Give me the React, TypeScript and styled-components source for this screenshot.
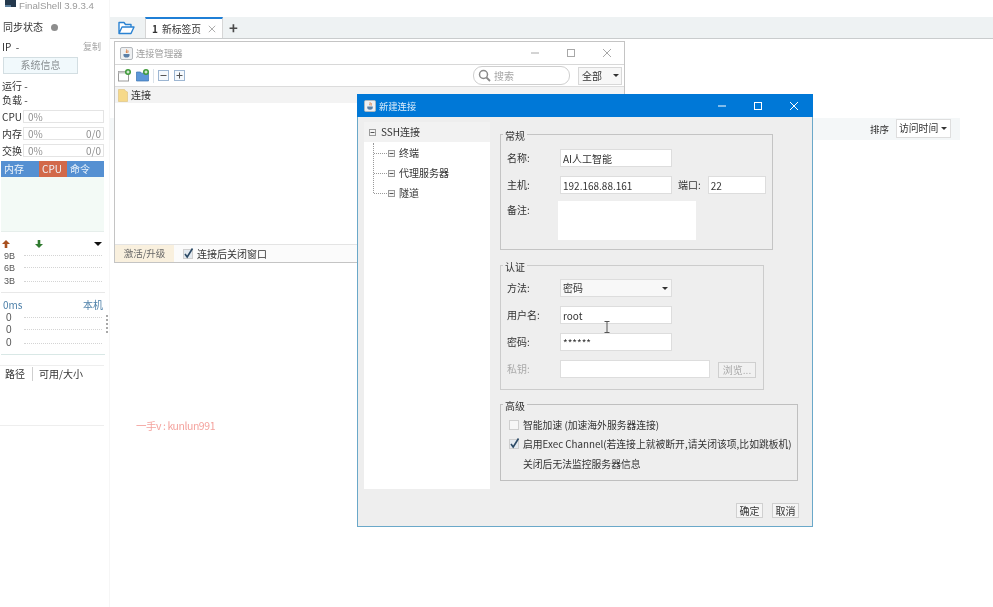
import React from "react";
import styled, { createGlobalStyle } from "styled-components";

const Global = createGlobalStyle`
  html, body { margin: 0; padding: 0; background: #fff; }
  * { box-sizing: border-box; }
`;

const Page = styled.div`
  position: relative;
  display: flex;
  width: 993px;
  height: 607px;
  overflow: hidden;
  background: #fff;
  color: #333;
  font: 10px/14px "Noto Sans CJK SC", "Noto Sans", sans-serif;
  filter: blur(0.35px);
`;

/* ---------- sidebar ---------- */
const Sidebar = styled.aside`
  position: relative;
  flex: 0 0 110px;
  display: flex;
  flex-direction: column;
  border-right: 1px solid #f6f6f6;
`;
const AppTitle = styled.div`
  display: flex;
  align-items: flex-start;
  gap: 3px;
  height: 10px;
  padding-left: 5px;
  color: #9a9a9a;
  font-family: "Liberation Sans", sans-serif;
  font-size: 9.7px;
  line-height: normal;
`;
const SyncRow = styled.div`
  display: flex;
  align-items: center;
  gap: 8px;
  height: 14px;
  margin-top: 10px;
  padding-left: 3px;
`;
const Dot = styled.i`
  width: 7px;
  height: 7px;
  border-radius: 50%;
  background: #8d8d8d;
`;
const IpRow = styled.div`
  display: flex;
  justify-content: space-between;
  width: 101px;
  height: 14px;
  margin-top: 6px;
  padding-left: 2px;
`;
const Muted = styled.span`
  color: #a5a5a5;
  font-size: 9px;
`;
const SysButton = styled.div`
  width: 75px;
  height: 17px;
  margin: 3px 0 5px 3px;
  border: 1px solid #d3dee2;
  background: #f1f9fc;
  color: #8a8f92;
  text-align: center;
  line-height: 14px;
`;
const PlainRow = styled.div`
  height: 14px;
  padding-left: 2px;
`;
const Meters = styled.div`
  display: flex;
  flex-direction: column;
  gap: 4px;
  margin-top: 3px;
`;
const MeterRow = styled.div`
  display: flex;
  align-items: center;
  height: 13px;
  padding-left: 2px;
`;
const MeterLabel = styled.span`
  width: 21px;
`;
const MeterBox = styled.div`
  display: flex;
  justify-content: space-between;
  width: 81px;
  height: 13px;
  padding: 0 2px 0 4px;
  border: 1px solid #e4e4e4;
  color: #909090;
  line-height: 11px;
  font-size: 10px;
`;
const TabStrip = styled.div`
  display: flex;
  width: 103px;
  height: 16px;
  margin: 4px 0 0 1px;
`;
const SideTab = styled.div<{ $w: number; $active?: boolean }>`
  width: ${(p) => p.$w}px;
  padding-left: 3px;
  background: ${(p) => (p.$active ? "#d2694a" : "#5590d2")};
  color: #eef5fb;
  line-height: 15px;
`;
const ChartArea = styled.div`
  width: 103px;
  height: 55px;
  margin-left: 1px;
  background: #f3faf6;
  border-bottom: 1px solid #e6eeeb;
`;
const NetHeader = styled.div`
  display: flex;
  align-items: center;
  justify-content: space-between;
  width: 102px;
  height: 12px;
  margin-top: 6px;
  padding: 0 0 0 2px;
`;
const ArrowGroup = styled.div`
  display: flex;
  gap: 25px;
`;
const LinePanel = styled.div<{ $tone: string }>`
  width: 104px;
  margin-left: 1px;
  border-bottom: 1px solid ${(p) => p.$tone};
`;
const ChartRow = styled.div<{ $h: number; $big?: boolean }>`
  display: flex;
  align-items: center;
  height: ${(p) => p.$h}px;
  padding-left: ${(p) => (p.$big ? 5 : 3)}px;
  font-family: "Liberation Sans", sans-serif;
  font-size: ${(p) => (p.$big ? 10 : 9)}px;
  line-height: 10px;
  color: #555;
`;
const RowLabel = styled.span<{ $big?: boolean }>`
  flex: 0 0 ${(p) => (p.$big ? 18 : 20)}px;
`;
const DotLine = styled.span`
  flex: 1;
  margin-right: 3px;
  border-top: 1px dotted #d4d4d4;
`;
const LatencyHead = styled.div`
  display: flex;
  justify-content: space-between;
  width: 104px;
  height: 14px;
  margin-top: 5px;
  padding: 0 1px 0 3px;
  color: #4c7fa8;
`;
const TablePanel = styled.div`
  display: flex;
  align-items: flex-start;
  width: 104px;
  height: 61px;
  margin-top: 10px;
  padding-top: 1px;
  border-top: 1px solid #eeeeee;
  border-bottom: 1px solid #eeeeee;
`;
const Col = styled.div<{ $w: number; $line?: boolean }>`
  width: ${(p) => p.$w}px;
  height: 14px;
  padding-left: ${(p) => (p.$line ? 6 : 5)}px;
  line-height: 14px;
  border-left: ${(p) => (p.$line ? "1px solid #cfcfcf" : "none")};
`;
const Splitter = styled.div`
  position: absolute;
  left: 106px;
  top: 315px;
  display: flex;
  flex-direction: column;
  gap: 2.5px;
  i {
    width: 1.5px;
    height: 1.5px;
    background: #a8a8a8;
  }
`;

/* ---------- main ---------- */
const Main = styled.main`
  flex: 1;
  display: flex;
  flex-direction: column;
`;
const TabBar = styled.div`
  display: flex;
  align-items: flex-end;
  height: 22px;
  margin-top: 17px;
  padding-left: 8px;
  background: #eef2f3;
  border-bottom: 1px solid #c9cccd;
`;
const FolderSlot = styled.div`
  display: flex;
  align-self: center;
  width: 27px;
`;
const Tab = styled.div`
  display: flex;
  align-items: center;
  width: 78px;
  height: 21px;
  padding-left: 6px;
  background: #fff;
  border: 1px solid #d6d6d6;
  border-top: 2px solid #1f7fd6;
  border-bottom: none;
  font-size: 9.8px;
  color: #333;
`;
const TabNum = styled.b`
  margin-right: 4px;
  font-size: 10px;
`;
const TabClose = styled.span`
  display: flex;
  margin-left: 7px;
`;
const PlusTab = styled.div`
  align-self: center;
  margin-left: 6px;
  color: #4a4a4a;
  font-size: 15px;
  font-weight: 700;
  line-height: 14px;
`;
const SortBar = styled.div`
  display: flex;
  align-items: center;
  justify-content: flex-end;
  gap: 7px;
  height: 22px;
  margin: 79px 33px 0 0;
  padding-right: 9px;
  background: #f4f7f8;
  font-size: 9.5px;
`;
const SortSelect = styled.div`
  display: flex;
  align-items: center;
  justify-content: space-between;
  width: 55px;
  height: 19px;
  margin-top: -2px;
  padding: 0 3px 0 2px;
  background: #fff;
  border: 1px solid #dedede;
  font-size: 9.8px;
`;
const Caret = styled.i<{ $c?: string; $big?: boolean }>`
  flex: none;
  width: 0;
  height: 0;
  border-left: ${(p) => (p.$big ? 4 : 3)}px solid transparent;
  border-right: ${(p) => (p.$big ? 4 : 3)}px solid transparent;
  border-top: ${(p) => (p.$big ? 4 : 3)}px solid ${(p) => p.$c ?? "#333"};
`;

/* ---------- connection manager ---------- */
const ManagerWindow = styled.section`
  position: absolute;
  left: 114px;
  top: 41px;
  width: 511px;
  height: 222px;
  display: flex;
  flex-direction: column;
  background: #fff;
  border: 1px solid #c4c4c4;
`;
const ManagerTitle = styled.header`
  display: flex;
  align-items: center;
  gap: 3px;
  height: 23px;
  padding-left: 5px;
  border-bottom: 1px solid #d8d8d8;
  color: #a0a0a0;
  font-size: 9.3px;
`;
const WinControls = styled.div`
  display: flex;
  gap: 26px;
  margin-left: auto;
  padding-right: 12px;
`;
const Toolbar = styled.div`
  display: flex;
  align-items: center;
  height: 22px;
  padding: 0 2px 0 3px;
  border-bottom: 1px solid #dcdcdc;
`;
const ToolIcons = styled.div`
  display: flex;
  align-items: center;
  gap: 5px;
`;
const ToolSep = styled.i`
  width: 1px;
  height: 14px;
  margin: 0 -1px;
  background: #dbe3ea;
`;
const SearchBox = styled.div`
  display: flex;
  align-items: center;
  gap: 3px;
  width: 97px;
  height: 19px;
  margin-left: auto;
  padding-left: 4px;
  border: 1px solid #cfcfcf;
  border-radius: 9px;
  color: #a5a5a5;
`;
const ScopeSelect = styled.div`
  display: flex;
  align-items: center;
  justify-content: space-between;
  width: 44px;
  height: 18px;
  margin-left: 8px;
  padding: 0 2px 0 3px;
  border: 1px solid #d8d8d8;
  background: #f7f7f7;
`;
const TreeRow = styled.div`
  display: flex;
  align-items: center;
  gap: 3px;
  height: 16px;
  padding-left: 3px;
  background: #f3f3f3;
`;
const ManagerSpacer = styled.div`
  flex: 1;
`;
const ManagerFooter = styled.footer`
  display: flex;
  align-items: center;
  height: 18px;
  border-top: 1px solid #e4e4e4;
  background: #fbfbfb;
`;
const UpgradeTab = styled.div`
  width: 59px;
  height: 17px;
  background: #f9f0de;
  color: #666;
  text-align: center;
  line-height: 17px;
  font-size: 9.5px;
`;
const FooterCheck = styled.div`
  display: flex;
  align-items: center;
  gap: 4px;
  margin-left: 9px;
`;

/* ---------- new connection dialog ---------- */
const Dialog = styled.section`
  position: absolute;
  left: 357px;
  top: 94px;
  width: 456px;
  height: 433px;
  display: flex;
  flex-direction: column;
  background: #eeeeee;
  border: 1px solid #6aa8c9;
  border-top: none;
`;
const DialogTitle = styled.header`
  display: flex;
  align-items: center;
  gap: 3px;
  height: 23px;
  margin: 0 -1px;
  padding-left: 7px;
  background: #0078d7;
  color: #d7ebfa;
  font-size: 9.3px;
`;
const DialogControls = styled.div`
  display: flex;
  align-items: center;
  gap: 26px;
  margin-left: auto;
  padding-right: 14px;
`;
const DialogBody = styled.div`
  flex: 1;
  display: flex;
  min-height: 0;
`;
const TreePane = styled.nav`
  flex: 0 0 126px;
  height: 367px;
  margin: 5px 0 0 6px;
  background: #fff;
`;
const TreeRoot = styled.div`
  display: flex;
  align-items: center;
  gap: 5px;
  height: 20px;
  padding-left: 5px;
  background: #f2f2f2;
`;
const TreeChildren = styled.div`
  width: 110px;
  margin: 1px 0 0 9px;
  height: 50px;
  border-left: 1px dotted #999;
`;
const TreeChild = styled.div`
  display: flex;
  align-items: center;
  gap: 4px;
  height: 20px;
  white-space: nowrap;
`;
const Connector = styled.i`
  width: 13px;
  margin-right: -3px;
  border-top: 1px dotted #999;
`;
const FormPane = styled.div`
  flex: 1;
  display: flex;
  flex-direction: column;
  padding: 11px 13px 8px 10px;
`;
const Group = styled.fieldset<{ $w: number; $h: number; $top: number; $tone?: string; $gap?: number }>`
  display: block;
  flex: none;
  width: ${(p) => p.$w}px;
  height: ${(p) => p.$h}px;
  margin: 0 0 ${(p) => p.$gap ?? 0}px;
  padding: ${(p) => p.$top}px 0 0 6px;
  border: 1px solid ${(p) => p.$tone ?? "#c4c4c4"};
  min-width: 0;
`;
const GroupTitle = styled.legend`
  position: relative;
  top: 2px;
  margin-left: -4px;
  padding: 0 2px;
  line-height: 12px;
  font-size: 10px;
`;
const FieldRow = styled.div<{ $gap?: number }>`
  display: flex;
  align-items: flex-start;
  margin-bottom: ${(p) => p.$gap ?? 9}px;
`;
const FieldLabel = styled.label<{ $disabled?: boolean }>`
  flex: 0 0 53px;
  height: 18px;
  line-height: 18px;
  color: ${(p) => (p.$disabled ? "#aaa" : "#333")};
`;
const TextBox = styled.input<{ $w: number }>`
  width: ${(p) => p.$w}px;
  height: 18px;
  padding: 0 0 0 2px;
  border: 1px solid #dddddd;
  background: #fff;
  color: #333;
  font: inherit;
  outline: none;
`;
const PortLabel = styled.span`
  margin: 0 7px 0 6px;
  line-height: 18px;
`;
const NoteBox = styled.div`
  width: 138px;
  height: 39px;
  margin-left: -2px;
  background: #fff;
`;
const MethodSelect = styled.div`
  display: flex;
  align-items: center;
  justify-content: space-between;
  width: 112px;
  height: 18px;
  padding: 0 3px 0 2px;
  border: 1px solid #dddddd;
  background: #f8f8f8;
`;
const BrowseButton = styled.div`
  width: 38px;
  height: 16px;
  margin: 2px 0 0 8px;
  border: 1px solid #cfcfcf;
  background: #f1f1f1;
  color: #aaa;
  text-align: center;
  line-height: 14px;
`;
const CheckRow = styled.div`
  display: flex;
  align-items: center;
  gap: 4px;
  height: 19.5px;
  padding-left: 2px;
  white-space: nowrap;
  font-size: 9.8px;
`;
const CheckGap = styled.span`
  flex: 0 0 10px;
`;
const ButtonBar = styled.div`
  display: flex;
  justify-content: flex-end;
  gap: 9px;
  margin-top: auto;
`;
const DialogButton = styled.div`
  width: 27px;
  height: 15px;
  border: 1px solid #d0d0d0;
  background: #f5f5f5;
  text-align: center;
  line-height: 14px;
`;
const Watermark = styled.div`
  position: absolute;
  left: 136px;
  top: 419px;
  color: #f4a39e;
  font-size: 10.5px;
  letter-spacing: -0.45px;
`;
const TextCursor = styled.svg`
  position: absolute;
  left: 604px;
  top: 321px;
`;

/* ---------- drawings ---------- */
const JavaIcon = ({ size = 13 }: { size?: number }) => (
  <svg width={size} height={size} viewBox="0 0 13 13" style={{ flex: "none" }}>
    <rect x="0.5" y="0.5" width="12" height="12" rx="1.5" fill="#eef0f2" stroke="#b4b8bc" />
    <path d="M6.5 2.5c1 1.2-1 2 0 3.4M8 3.6c.5.8-.8 1.4 0 2.3" stroke="#d9702c" strokeWidth="1" fill="none" />
    <path d="M3.5 7h6v1.2c0 1.7-1.2 2.3-3 2.3s-3-.6-3-2.3z" fill="#5b7fa6" />
  </svg>
);
const MinGlyph = ({ c = "#a8a8a8" }: { c?: string }) => (
  <svg width="10" height="10" viewBox="0 0 10 10"><path d="M1 5h8" stroke={c} fill="none" /></svg>
);
const MaxGlyph = ({ c = "#a8a8a8" }: { c?: string }) => (
  <svg width="10" height="10" viewBox="0 0 10 10"><rect x="1.5" y="1.5" width="7" height="7" stroke={c} fill="none" /></svg>
);
const CloseGlyph = ({ c = "#a8a8a8", size = 10 }: { c?: string; size?: number }) => (
  <svg width={size} height={size} viewBox="0 0 10 10"><path d="M1 1l8 8M9 1l-8 8" stroke={c} fill="none" /></svg>
);
const FolderOpen = () => (
  <svg width="17" height="14" viewBox="0 0 17 14">
    <path d="M1 12.5V1.5h5l1.5 2H13v2.5M1 12.5L4 6h12l-3 6.5z" fill="#fff" stroke="#2b83d2" strokeWidth="1.4" strokeLinejoin="round" />
  </svg>
);
const NewConnIcon = () => (
  <svg width="13" height="13" viewBox="0 0 13 13">
    <rect x="0.5" y="2.5" width="10" height="9.5" fill="#fff" stroke="#9a9a9a" />
    <rect x="0.5" y="2.5" width="10" height="2" fill="#c9c9c9" />
    <circle cx="10" cy="3" r="3" fill="#3f9a3a" />
    <path d="M8.5 3h3M10 1.5v3" stroke="#fff" />
  </svg>
);
const NewFolderIcon = () => (
  <svg width="13" height="13" viewBox="0 0 13 13">
    <path d="M0.5 3h4l1 1.2h7V12h-12z" fill="#5c97d8" stroke="#3a73b3" strokeWidth=".7" />
    <circle cx="10" cy="3" r="3" fill="#3f9a3a" />
    <path d="M8.5 3h3M10 1.5v3" stroke="#fff" />
  </svg>
);
const BoxIcon = ({ plus }: { plus?: boolean }) => (
  <svg width="11" height="11" viewBox="0 0 11 11">
    <rect x="0.5" y="0.5" width="10" height="10" fill="#f5f9fd" stroke="#9db6d2" />
    <path d={plus ? "M2.5 5.5h6M5.5 2.5v6" : "M2.5 5.5h6"} stroke="#555" />
  </svg>
);
const TreeBox = () => (
  <svg width="7" height="7" viewBox="0 0 7 7" style={{ flex: "none" }}>
    <rect x="0.5" y="0.5" width="6" height="6" fill="#f4f4f4" stroke="#9a9a9a" />
    <path d="M1.5 3.5h4" stroke="#555" />
  </svg>
);
const SearchIcon = () => (
  <svg width="13" height="13" viewBox="0 0 13 13">
    <circle cx="5.5" cy="5.5" r="4" fill="none" stroke="#8a8a8a" strokeWidth="1.5" />
    <path d="M8.5 8.5l3.5 3.5" stroke="#8a8a8a" strokeWidth="1.8" />
  </svg>
);
const TreeFolder = () => (
  <svg width="10" height="13" viewBox="0 0 10 13">
    <path d="M0.5 0.5h6l1 1.5 2 1v9.5h-9z" fill="#f6d98a" stroke="#dcc07a" strokeWidth=".6" />
  </svg>
);
const CheckBox = ({ on = true }: { on?: boolean }) => (
  <svg width="10" height="10" viewBox="0 0 10 10" style={{ flex: "none", overflow: "visible" }}>
    <rect x="0.5" y="0.5" width="9" height="9" fill={on ? "#e4eaf0" : "#f6f6f6"} stroke="#cfcfcf" />
    {on && <path d="M2 5l2.2 3L9.5 -0.5" stroke="#2c4a66" strokeWidth="1.6" fill="none" />}
  </svg>
);
const ArrowUp = () => (
  <svg width="8" height="8" viewBox="0 0 8 8"><path d="M4 0l4 4H5.3v4H2.7V4H0z" fill="#a8501f" /></svg>
);
const ArrowDown = () => (
  <svg width="8" height="8" viewBox="0 0 8 8"><path d="M4 8L0 4h2.7V0h2.6v4H8z" fill="#2f7a2f" /></svg>
);
const ShellLogo = () => (
  <svg width="11" height="7" viewBox="0 0 11 7" style={{ flex: "none" }}>
    <rect x="0" y="0" width="11" height="7" fill="#24384c" />
    <rect x="0" y="5" width="6" height="2" fill="#5d7f9c" />
  </svg>
);

const netRows = [
  { label: "9B", h: 11 },
  { label: "6B", h: 13 },
  { label: "3B", h: 14 },
];
const latencyRows = [
  { id: "a", h: 11 },
  { id: "b", h: 13 },
  { id: "c", h: 14 },
];

export default function App() {
  return (
    <Page>
      <Global />
      <Sidebar>
        <AppTitle><ShellLogo />FinalShell 3.9.3.4</AppTitle>
        <SyncRow>同步状态<Dot /></SyncRow>
        <IpRow><span>IP&nbsp;&nbsp;-</span><Muted>复制</Muted></IpRow>
        <SysButton>系统信息</SysButton>
        <PlainRow>运行 -</PlainRow>
        <PlainRow>负载 -</PlainRow>
        <Meters>
          <MeterRow><MeterLabel>CPU</MeterLabel><MeterBox><span>0%</span></MeterBox></MeterRow>
          <MeterRow><MeterLabel>内存</MeterLabel><MeterBox><span>0%</span><span>0/0</span></MeterBox></MeterRow>
          <MeterRow><MeterLabel>交换</MeterLabel><MeterBox><span>0%</span><span>0/0</span></MeterBox></MeterRow>
        </Meters>
        <TabStrip>
          <SideTab $w={38}>内存</SideTab>
          <SideTab $w={28} $active>CPU</SideTab>
          <SideTab $w={37}>命令</SideTab>
        </TabStrip>
        <ChartArea />
        <NetHeader>
          <ArrowGroup><ArrowUp /><ArrowDown /></ArrowGroup>
          <Caret $c="#111" $big />
        </NetHeader>
        <LinePanel $tone="#e8e8e8">
          {netRows.map((r) => (
            <ChartRow key={r.label} $h={r.h}><RowLabel>{r.label}</RowLabel><DotLine /></ChartRow>
          ))}
          <ChartRow $h={4} />
        </LinePanel>
        <LatencyHead><span>0ms</span><span>本机</span></LatencyHead>
        <LinePanel $tone="#d9e8e6">
          {latencyRows.map((r) => (
            <ChartRow key={r.id} $h={r.h} $big>
              <RowLabel $big>0</RowLabel>
              <DotLine />
            </ChartRow>
          ))}
          <ChartRow $h={4} />
        </LinePanel>
        <TablePanel>
          <Col $w={32}>路径</Col>
          <Col $w={70} $line>可用/大小</Col>
        </TablePanel>
        <Splitter><i /><i /><i /><i /><i /></Splitter>
      </Sidebar>

      <Main>
        <TabBar>
          <FolderSlot><FolderOpen /></FolderSlot>
          <Tab><TabNum>1</TabNum>新标签页<TabClose><CloseGlyph c="#999" size={8} /></TabClose></Tab>
          <PlusTab>+</PlusTab>
        </TabBar>
        <SortBar>
          排序
          <SortSelect>访问时间<Caret /></SortSelect>
        </SortBar>
      </Main>

      <ManagerWindow>
        <ManagerTitle>
          <JavaIcon />
          连接管理器
          <WinControls><MinGlyph /><MaxGlyph /><CloseGlyph /></WinControls>
        </ManagerTitle>
        <Toolbar>
          <ToolIcons>
            <NewConnIcon /><NewFolderIcon /><ToolSep /><BoxIcon /><BoxIcon plus />
          </ToolIcons>
          <SearchBox><SearchIcon />搜索</SearchBox>
          <ScopeSelect>全部<Caret /></ScopeSelect>
        </Toolbar>
        <TreeRow><TreeFolder />连接</TreeRow>
        <ManagerSpacer />
        <ManagerFooter>
          <UpgradeTab>激活/升级</UpgradeTab>
          <FooterCheck><CheckBox />连接后关闭窗口</FooterCheck>
        </ManagerFooter>
      </ManagerWindow>

      <Dialog>
        <DialogTitle>
          <JavaIcon size={12} />
          新建连接
          <DialogControls><MinGlyph c="#fff" /><MaxGlyph c="#fff" /><CloseGlyph c="#fff" /></DialogControls>
        </DialogTitle>
        <DialogBody>
          <TreePane>
            <TreeRoot><TreeBox />SSH连接</TreeRoot>
            <TreeChildren>
              <TreeChild><Connector /><TreeBox />终端</TreeChild>
              <TreeChild><Connector /><TreeBox />代理服务器</TreeChild>
              <TreeChild><Connector /><TreeBox />隧道</TreeChild>
            </TreeChildren>
          </TreePane>
          <FormPane>
            <Group $w={273} $h={122} $top={9} $gap={9}>
              <GroupTitle>常规</GroupTitle>
              <FieldRow>
                <FieldLabel>名称:</FieldLabel>
                <TextBox $w={112} readOnly value="AI人工智能" />
              </FieldRow>
              <FieldRow $gap={7}>
                <FieldLabel>主机:</FieldLabel>
                <TextBox $w={112} readOnly value="192.168.88.161" />
                <PortLabel>端口:</PortLabel>
                <TextBox $w={58} readOnly value="22" />
              </FieldRow>
              <FieldRow>
                <FieldLabel>备注:</FieldLabel>
                <NoteBox />
              </FieldRow>
            </Group>
            <Group $w={264} $h={131} $top={8} $gap={8} $tone="#cccccc">
              <GroupTitle>认证</GroupTitle>
              <FieldRow>
                <FieldLabel>方法:</FieldLabel>
                <MethodSelect>密码<Caret /></MethodSelect>
              </FieldRow>
              <FieldRow>
                <FieldLabel>用户名:</FieldLabel>
                <TextBox $w={112} readOnly value="root" />
              </FieldRow>
              <FieldRow>
                <FieldLabel>密码:</FieldLabel>
                <TextBox $w={112} readOnly value="******" />
              </FieldRow>
              <FieldRow>
                <FieldLabel $disabled>私钥:</FieldLabel>
                <TextBox $w={150} readOnly value="" />
                <BrowseButton>浏览...</BrowseButton>
              </FieldRow>
            </Group>
            <Group $w={298} $h={83} $top={5} $tone="#bfbfbf">
              <GroupTitle>高级</GroupTitle>
              <CheckRow><CheckBox on={false} />智能加速 (加速海外服务器连接)</CheckRow>
              <CheckRow><CheckBox />启用Exec Channel(若连接上就被断开,请关闭该项,比如跳板机)</CheckRow>
              <CheckRow><CheckGap />关闭后无法监控服务器信息</CheckRow>
            </Group>
            <ButtonBar>
              <DialogButton>确定</DialogButton>
              <DialogButton>取消</DialogButton>
            </ButtonBar>
          </FormPane>
        </DialogBody>
      </Dialog>

      <Watermark>一手v : kunlun991</Watermark>
      <TextCursor width="6" height="12" viewBox="0 0 6 12">
        <path d="M0.5 0.5h5M3 0.5v11M0.5 11.5h5" stroke="#555" fill="none" />
      </TextCursor>
    </Page>
  );
}
